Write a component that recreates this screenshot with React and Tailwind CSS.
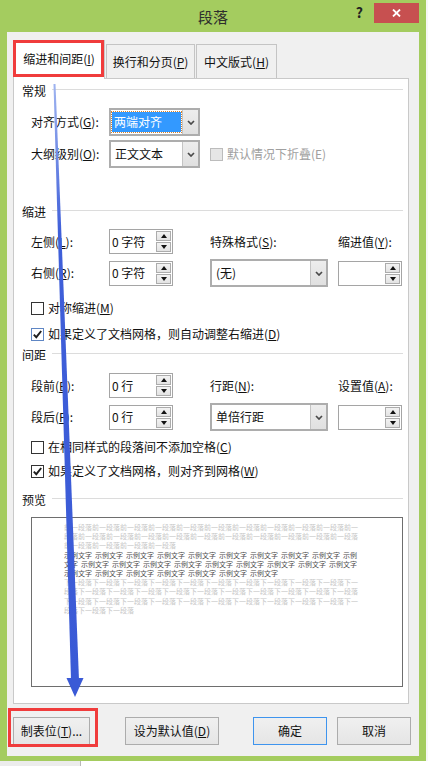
import React from 'react'

const font = "font-['Noto_Sans_CJK_SC','Noto_Sans',sans-serif]"

// access-key letter, underlined like a Windows mnemonic
function K({ children }) {
  return <span className="underline underline-offset-1">{children}</span>
}

function Section({ title, className = '' }) {
  return (
    <div className={`flex h-[16px] items-center ${className}`}>
      <span className="leading-none">{title}</span>
      <div className="ml-[6px] mt-[-3px] h-px flex-1 bg-[#dcdcdc]" />
    </div>
  )
}

function Chevron() {
  return (
    <svg width="8" height="5" viewBox="0 0 8 5">
      <path d="M1 1 L4 4 L7 1" fill="none" stroke="#4a4a4a" strokeWidth="1.7" />
    </svg>
  )
}

function Select({ value, selected, className = '' }) {
  return (
    <div className={`flex h-[28px] border-2 border-[#adadad] bg-white ${className}`}>
      <div className="flex flex-1 items-stretch py-[2px] pl-px pr-px">
        {selected ? (
          <span className="flex flex-1 items-center bg-[#3399ff] pl-[2px] text-white outline-1 outline-dotted outline-[#d9822b]">
            {value}
          </span>
        ) : (
          <span className="flex items-center pl-[3px]">{value}</span>
        )}
      </div>
      <div className="flex w-[16px] items-center justify-center border-l border-[#c4c4c4] bg-gradient-to-b from-[#ededed] to-[#e0e0e0]">
        <Chevron />
      </div>
    </div>
  )
}

function SpinBtn({ up }) {
  return (
    <div className="flex flex-1 items-center justify-center border border-[#acacac] bg-gradient-to-b from-[#f3f3f3] to-[#e3e3e3]">
      <svg width="6" height="4" viewBox="0 0 6 4">
        <polygon points={up ? '0,4 3,0 6,4' : '0,0 3,4 6,0'} fill="#111" />
      </svg>
    </div>
  )
}

function Spin({ value }) {
  return (
    <div className="flex h-[25px] w-[64px] border border-[#a5a5a5] bg-white">
      <div className="flex flex-1 items-center pl-[2px]">{value}</div>
      <div className="flex w-[16px] flex-col gap-px py-px pr-px">
        <SpinBtn up />
        <SpinBtn />
      </div>
    </div>
  )
}

function Check({ checked, disabled, blue, children, className = '' }) {
  const box = disabled
    ? 'border-[#bcbcbc] bg-[#e6e6e6]'
    : blue
      ? 'border-[#5f86c4] bg-white'
      : 'border-[#333333] bg-white'
  return (
    <div className={`flex h-[16px] items-center ${className}`}>
      <span className={`flex h-[13px] w-[13px] items-center justify-center border ${box}`}>
        {checked && (
          <svg width="11" height="11" viewBox="0 0 11 11">
            <path d="M1.8 5.6 L4.3 8.2 L9.2 2" fill="none" stroke="#1e1e1e" strokeWidth="1.9" />
          </svg>
        )}
      </span>
      <span className={`ml-[4px] ${disabled ? 'text-[#a0a0a0]' : ''}`}>{children}</span>
    </div>
  )
}

function Button({ children, className = '' }) {
  return (
    <button
      className={`flex h-[28px] items-center justify-center border bg-gradient-to-b from-[#f0f0f0] to-[#e5e5e5] ${className}`}
    >
      {children}
    </button>
  )
}

const before = ['前一段落'.repeat(10) + '前一', '段落' + '前一段落'.repeat(10), '前一段落'.repeat(4)]
const after = [
  '下一段落'.repeat(10) + '下一',
  '段落' + '下一段落'.repeat(10),
  '下一段落'.repeat(10) + '下一',
  '段落下一段落下一段落',
]
const sample = [
  [...Array(9).fill('示例文字'), '示例'],
  ['文字', ...Array(9).fill('示例文字')],
  Array(7).fill('示例文字'),
]

function Preview() {
  return (
    <div className="ml-[9px] mt-[9px] h-[170px] w-[372px] border border-[#6e6e6e] bg-white pl-[32px] pt-[5px] text-[7px] leading-[9.2px]">
      {before.map((t, i) => (
        <div key={'b' + i} className="h-[9.2px] whitespace-nowrap text-[#c6c6c6]">{t}</div>
      ))}
      {sample.map((words, i) => (
        <div key={'s' + i} className="flex h-[9.2px] gap-[3px] whitespace-nowrap text-[#4d4d4d]">
          {words.map((w, j) => (
            <span key={j}>{w}</span>
          ))}
        </div>
      ))}
      {after.map((t, i) => (
        <div key={'a' + i} className="h-[9.2px] whitespace-nowrap text-[#c6c6c6]">{t}</div>
      ))}
    </div>
  )
}

function IndentTab() {
  return (
    <div className="flex h-[626px] w-[396px] flex-col border border-[#c9c9c9] bg-white pl-[8px] pr-[5px]">
      <Section title="常规" className="mt-[4px]" />
      <div className="mt-[9px] flex h-[28px] items-center pl-[9px]">
        <span className="w-[78px]">对齐方式(<K>G</K>):</span>
        <Select value="两端对齐" selected className="w-[91px]" />
      </div>
      <div className="mt-[4px] flex h-[28px] items-center pl-[9px]">
        <span className="w-[78px]">大纲级别(<K>O</K>):</span>
        <Select value="正文文本" className="w-[91px]" />
        <Check disabled className="ml-[10px]">默认情况下折叠(E)</Check>
      </div>

      <Section title="缩进" className="mt-[36px]" />
      <div className="mt-[9px] flex h-[25px] items-center pl-[9px]">
        <span className="w-[78px]">左侧(<K>L</K>):</span>
        <Spin value="0 字符" />
        <span className="ml-[37px] w-[128px]">特殊格式(<K>S</K>):</span>
        <span>缩进值(<K>Y</K>):</span>
      </div>
      <div className="mt-[5px] flex h-[28px] items-center pl-[9px]">
        <span className="w-[78px]">右侧(<K>R</K>):</span>
        <Spin value="0 字符" />
        <Select value="(无)" className="ml-[37px] w-[118px]" />
        <div className="ml-[10px]">
          <Spin value="" />
        </div>
      </div>
      <Check className="mt-[13px] pl-[9px]">对称缩进(<K>M</K>)</Check>
      <Check checked blue className="mt-[10px] pl-[9px]">
        如果定义了文档网格，则自动调整右缩进(<K>D</K>)
      </Check>

      <Section title="间距" className="mt-[5px]" />
      <div className="mt-[10px] flex h-[25px] items-center pl-[9px]">
        <span className="w-[78px]">段前(<K>B</K>):</span>
        <Spin value="0 行" />
        <span className="ml-[37px] w-[128px]">行距(<K>N</K>):</span>
        <span>设置值(<K>A</K>):</span>
      </div>
      <div className="mt-[5px] flex h-[28px] items-center pl-[9px]">
        <span className="w-[78px]">段后(<K>F</K>):</span>
        <Spin value="0 行" />
        <Select value="单倍行距" className="ml-[37px] w-[118px]" />
        <div className="ml-[10px]">
          <Spin value="" />
        </div>
      </div>
      <Check className="mt-[8px] pl-[9px]">在相同样式的段落间不添加空格(<K>C</K>)</Check>
      <Check checked className="mt-[8px] pl-[9px]">
        如果定义了文档网格，则对齐到网格(<K>W</K>)
      </Check>

      <Section title="预览" className="mt-[13px]" />
      <Preview />
    </div>
  )
}

export default function App() {
  return (
    <div className={`relative flex h-[766px] w-[428px] flex-col overflow-hidden bg-[#f7f7f7] text-[12px] text-[#111] ${font}`}>
      <div className="flex h-[761px] w-[426px] flex-col bg-[#a4cc5f] px-[7px] pb-[5px]">
        {/* title bar */}
        <div className="grid h-[32px] grid-cols-[1fr_auto_1fr]">
          <div />
          <div className="flex items-center pt-[2px] text-[15px] text-[#2d2d2d]">段落</div>
          <div className="flex items-start justify-end">
            <span className="mr-[11px] mt-[5px] text-[14px] font-bold leading-[14px] text-[#222]">?</span>
            <button className="mt-[3px] flex h-[20px] w-[45px] items-center justify-center bg-[#c75050]">
              <svg width="9" height="8" viewBox="0 0 9 8">
                <path d="M1 0.5 L8 7.5 M8 0.5 L1 7.5" stroke="#fff" strokeWidth="1.8" />
              </svg>
            </button>
          </div>
        </div>

        <div className="flex flex-1 flex-col bg-[#f0f0f0] px-[6px] pt-[8px]">
          {/* tabs */}
          <div className="relative z-10 flex h-[38px] items-end">
            <div className="relative mb-[-1px] flex h-[39px] w-[92px] items-center justify-center border border-b-0 border-[#c9c9c9] bg-white pb-[3px]">
              缩进和间距(<K>I</K>)
              <div className="pointer-events-none absolute -left-px -top-px right-0 bottom-[2px] border-[3px] border-[#f03c3c]" />
            </div>
            <div className="ml-px flex h-[34px] w-[89px] items-center justify-center border border-b-0 border-[#c4c4c4] bg-[#f0f0f0]">
              换行和分页(<K>P</K>)
            </div>
            <div className="ml-px flex h-[34px] w-[81px] items-center justify-center border border-b-0 border-[#c4c4c4] bg-[#f0f0f0]">
              中文版式(<K>H</K>)
            </div>
          </div>

          <IndentTab />

          {/* footer buttons */}
          <div className="mt-[13px] flex">
            <div className="relative">
              <Button className="w-[77px] border-[#acacac]">制表位(<K>T</K>)...</Button>
              <div className="pointer-events-none absolute -left-[5px] -top-[9px] -right-[8px] -bottom-[2px] border-[3px] border-[#f03c3c]" />
            </div>
            <Button className="ml-[35px] w-[94px] border-[#acacac]">设为默认值(<K>D</K>)</Button>
            <Button className="ml-[34px] w-[74px] border-[#3e94ee]">确定</Button>
            <Button className="ml-[10px] w-[74px] border-[#acacac]">取消</Button>
          </div>
        </div>
      </div>

      {/* strip of the window behind */}
      <div className="flex flex-1">
        <div className="w-[81px] border-r border-[#b9b9b9] bg-[#ececec]" />
        <div className="flex-1 bg-white" />
      </div>

      {/* blue annotation arrow */}
      <svg className="pointer-events-none absolute inset-0" width="428" height="766" viewBox="0 0 428 766">
        <defs>
          <linearGradient id="shaft" x1="0" y1="84" x2="0" y2="680" gradientUnits="userSpaceOnUse">
            <stop offset="0" stopColor="#9fb4f0" />
            <stop offset="0.25" stopColor="#3f5fd9" />
            <stop offset="1" stopColor="#3a5ad6" />
          </linearGradient>
        </defs>
        <polygon points="53.5,84 55.5,84 79,680 71,680" fill="url(#shaft)" />
        <polygon points="66.5,678 83.5,678 75,697" fill="#3a5ad6" />
      </svg>
    </div>
  )
}
